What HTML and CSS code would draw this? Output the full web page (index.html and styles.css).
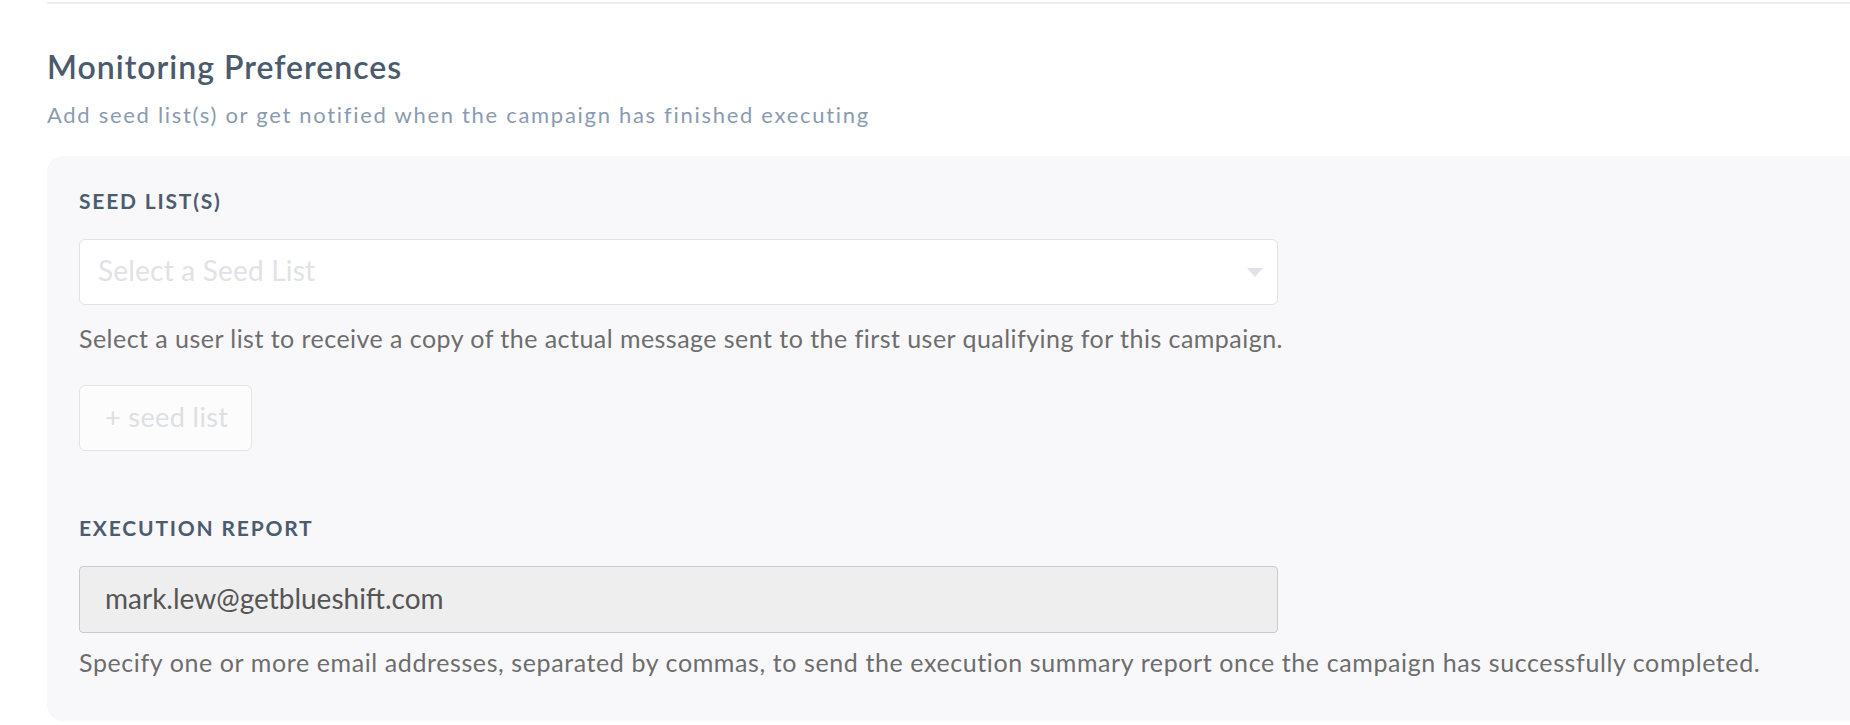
FILE: index.html
```html
<!DOCTYPE html>
<html lang="en">
<head>
<meta charset="utf-8">
<title>Monitoring Preferences</title>
<link rel="stylesheet" href="styles.css">
</head>
<body>
<div class="page">
  <div class="divider"></div>
  <section class="section">
    <h2 class="section-title">Monitoring Preferences</h2>
    <p class="section-sub">Add seed list(s) or get notified when the campaign has finished executing</p>
    <div class="panel">
      <div class="group">
        <div class="label">SEED LIST(S)</div>
        <div class="select">
          <span class="placeholder">Select a Seed List</span>
          <svg class="caret" width="16" height="9" viewBox="0 0 16 9"><path d="M0 0 H16 L8 9 Z" fill="#dfe2e6"/></svg>
        </div>
        <p class="help help-seed">Select a user list to receive a copy of the actual message sent to the first user qualifying for this campaign.</p>
        <div class="btn">+ seed list</div>
      </div>
      <div class="group group-report">
        <div class="label">EXECUTION REPORT</div>
        <div class="input">mark.lew@getblueshift.com</div>
        <p class="help help-report">Specify one or more email addresses, separated by commas, to send the execution summary report once the campaign has successfully completed.</p>
      </div>
    </div>
  </section>
</div>
</body>
</html>
```
FILE: styles.css
```css
* { box-sizing: border-box; }
html, body { margin: 0; padding: 0; background: #ffffff; }
body { font-family: "Lato", "Open Sans", sans-serif; overflow: hidden; }

.page { padding-top: 2px; }
.divider { margin-left: 47px; height: 2px; background: #ededed; }

.section { padding-left: 47px; }
.section-title {
  margin: 43px 0 0;
  font-size: 32px;
  line-height: 40px;
  font-weight: 600;
  letter-spacing: 1px;
  color: #4b5a6c;
}
.section-sub {
  margin: 13px 0 0;
  font-size: 22px;
  line-height: 30px;
  letter-spacing: 1.7px;
  color: #8a9bb0;
}

.panel {
  margin-top: 26px;
  background: #f8f8fa;
  border-radius: 16px 0 0 16px;
  padding: 33px 32px 43px;
}

.label {
  font-size: 21px;
  line-height: 24px;
  font-weight: 700;
  letter-spacing: 1.8px;
  color: #4c5c6f;
}

.select {
  margin-top: 26px;
  width: 1199px;
  height: 66px;
  background: #ffffff;
  border: 1px solid #dfe3e6;
  border-radius: 6px;
  padding: 0 14px 4px 18px;
  display: flex;
  align-items: center;
  justify-content: space-between;
}
.placeholder { font-size: 28px; letter-spacing: 0.2px; color: #dfe2e6; }
.caret { display: block; margin-top: 4px; }

.help {
  margin: 0;
  font-size: 25px;
  line-height: 32px;
  letter-spacing: 0.5px;
  color: #6d6d6d;
}
.help-seed { margin-top: 17px; letter-spacing: 0.46px; }

.btn {
  margin-top: 31px;
  width: 173px;
  height: 66px;
  border: 1px solid #e1e4e8;
  border-radius: 6px;
  background: #fcfcfd;
  color: #dcdfe3;
  font-size: 27px;
  letter-spacing: 0.4px;
  display: flex;
  align-items: center;
  padding-left: 25px;
  padding-bottom: 3px;
}

.group-report { margin-top: 65px; }

.input {
  margin-top: 26px;
  width: 1199px;
  height: 67px;
  background: #eeeeee;
  border: 1px solid #cbcbcb;
  border-radius: 4px;
  padding-left: 25px;
  padding-bottom: 3px;
  display: flex;
  align-items: center;
  font-size: 28px;
  color: #555555;
}
.help-report { margin-top: 13px; letter-spacing: 0.6px; }
```
